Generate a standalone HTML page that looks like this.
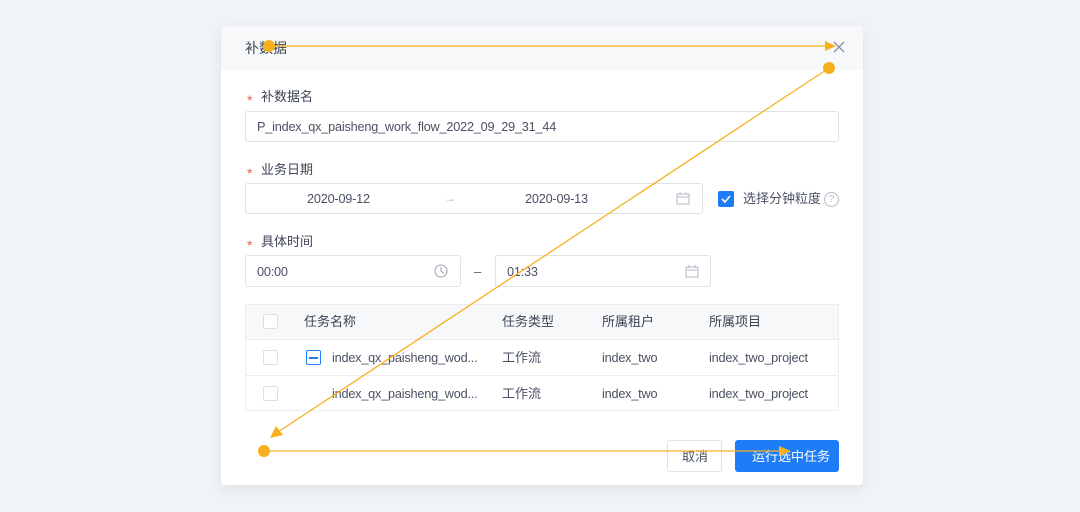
<!DOCTYPE html>
<html><head><meta charset="utf-8"><style>
*{box-sizing:border-box;margin:0;padding:0}
body{width:1080px;height:512px;background:#f0f3f7;font-family:"Liberation Sans","Noto Sans CJK SC",sans-serif;color:#3d4454;font-size:13px;position:relative;overflow:hidden}
.a{position:absolute;line-height:18px}
.modal{left:221px;top:26px;width:642px;height:459px;background:#fff;border-radius:4px;box-shadow:0 4px 14px rgba(0,0,0,.08)}
.hdr{left:221px;top:26px;width:642px;height:44px;background:#f7f8fa;border-radius:4px 4px 0 0}
.inp{border:1px solid #dfe2e8;border-radius:3px;background:#fff}
.lbl{font-size:13px;color:#3d4454}
.star{color:#f5594e;font-size:14px}
.cb{width:15px;height:15px;border:1px solid #dcdfe6;border-radius:2px;background:#fff}
.t{font-size:13px;color:#4a5163;white-space:nowrap}
.l{font-size:12.7px;letter-spacing:-0.2px}
</style></head><body>
<div class="a modal"></div>
<div class="a hdr"></div>
<div class="a" style="left:245px;top:39px;font-size:14px;color:#3d4454">补数据</div>
<svg class="a" style="left:833px;top:41px" width="12" height="12"><path d="M1 1L11 11M11 1L1 11" stroke="#8a90a0" stroke-width="1.3"/></svg>

<div class="a star" style="left:247px;top:91px">*</div>
<div class="a lbl" style="left:261px;top:88px">补数据名</div>
<div class="a inp" style="left:245px;top:111px;width:594px;height:31px"></div>
<div class="a t l" style="left:257px;top:118px">P_index_qx_paisheng_work_flow_2022_09_29_31_44</div>

<div class="a star" style="left:247px;top:164px">*</div>
<div class="a lbl" style="left:261px;top:161px">业务日期</div>
<div class="a inp" style="left:245px;top:183px;width:458px;height:31px"></div>
<div class="a t l" style="left:307px;top:190px">2020-09-12</div>
<div class="a" style="left:444px;top:189px;color:#b0b5c0;font-size:12px">→</div>
<div class="a t l" style="left:525px;top:190px">2020-09-13</div>
<svg class="a" style="left:676px;top:192px" width="14" height="13"><rect x="1" y="2" width="12" height="10" fill="none" stroke="#b5bac4"/><path d="M1 5H13M4 0V3M10 0V3" stroke="#b5bac4"/></svg>
<div class="a" style="left:718px;top:191px;width:16px;height:16px;background:#1f7cf7;border-radius:2px"></div>
<svg class="a" style="left:718px;top:191px" width="16" height="16"><path d="M4 8L7 11L12 5" stroke="#fff" stroke-width="1.6" fill="none"/></svg>
<div class="a t" style="left:743px;top:190px">选择分钟粒度</div>
<div class="a" style="left:824px;top:192px;width:15px;height:15px;border:1px solid #b5bac4;border-radius:50%;font-size:10px;color:#b5bac4;text-align:center;line-height:13px">?</div>

<div class="a star" style="left:247px;top:236px">*</div>
<div class="a lbl" style="left:261px;top:233px">具体时间</div>
<div class="a inp" style="left:245px;top:255px;width:216px;height:32px"></div>
<div class="a t l" style="left:257px;top:263px">00:00</div>
<svg class="a" style="left:434px;top:264px" width="14" height="14"><circle cx="7" cy="7" r="6" fill="none" stroke="#9aa0ab"/><path d="M7 3V7L9.5 9.5" stroke="#9aa0ab" fill="none"/></svg>
<div class="a" style="left:474px;top:263px;color:#5a6070">–</div>
<div class="a inp" style="left:495px;top:255px;width:216px;height:32px"></div>
<div class="a t l" style="left:507px;top:263px">01:33</div>
<svg class="a" style="left:685px;top:265px" width="14" height="13"><rect x="1" y="2" width="12" height="10" fill="none" stroke="#b5bac4"/><path d="M1 5H13M4 0V3M10 0V3" stroke="#b5bac4"/></svg>

<div class="a" style="left:245px;top:304px;width:594px;height:107px;border:1px solid #ebedf0"></div>
<div class="a" style="left:246px;top:305px;width:592px;height:34px;background:#f7f8fa"></div>
<div class="a" style="left:246px;top:339px;width:592px;height:1px;background:#ebedf0"></div>
<div class="a" style="left:246px;top:375px;width:592px;height:1px;background:#ebedf0"></div>
<div class="a cb" style="left:263px;top:314px"></div>
<div class="a t" style="left:304px;top:313px;color:#3d4454">任务名称</div>
<div class="a t" style="left:502px;top:313px;color:#3d4454">任务类型</div>
<div class="a t" style="left:602px;top:313px;color:#3d4454">所属租户</div>
<div class="a t" style="left:709px;top:313px;color:#3d4454">所属项目</div>
<div class="a cb" style="left:263px;top:350px"></div>
<div class="a" style="left:306px;top:350px;width:15px;height:15px;border:1px solid #1f7cf7;border-radius:2px"></div>
<div class="a" style="left:309px;top:357px;width:9px;height:2px;background:#1f7cf7"></div>
<div class="a t l" style="left:332px;top:349px">index_qx_paisheng_wod...</div>
<div class="a t" style="left:502px;top:349px">工作流</div>
<div class="a t l" style="left:602px;top:349px">index_two</div>
<div class="a t l" style="left:709px;top:349px">index_two_project</div>
<div class="a cb" style="left:263px;top:386px"></div>
<div class="a t l" style="left:332px;top:385px">index_qx_paisheng_wod...</div>
<div class="a t" style="left:502px;top:385px">工作流</div>
<div class="a t l" style="left:602px;top:385px">index_two</div>
<div class="a t l" style="left:709px;top:385px">index_two_project</div>

<div class="a inp" style="left:667px;top:440px;width:55px;height:32px"></div>
<div class="a t" style="left:682px;top:448px">取消</div>
<div class="a" style="left:735px;top:440px;width:104px;height:32px;background:#1f7cf7;border-radius:3px"></div>
<div class="a t" style="left:752px;top:448px;color:#fff">运行选中任务</div>

<svg class="a" style="left:0;top:0" width="1080" height="512">
<g stroke="#f7b01f" stroke-width="1.3" fill="#f7b01f">
<line x1="269" y1="46" x2="826" y2="46"/>
<path d="M836 46L825 41L825 51Z" stroke="none"/>
<circle cx="269" cy="46" r="6" stroke="none"/>
<line x1="829" y1="68" x2="278" y2="432"/>
<path d="M270 438L276 426L283 435Z" stroke="none"/>
<circle cx="829" cy="68" r="6" stroke="none"/>
<line x1="264" y1="451" x2="780" y2="451"/>
<path d="M791 451L779 446L779 456Z" stroke="none"/>
<circle cx="264" cy="451" r="6" stroke="none"/>
</g></svg>
</body></html>
